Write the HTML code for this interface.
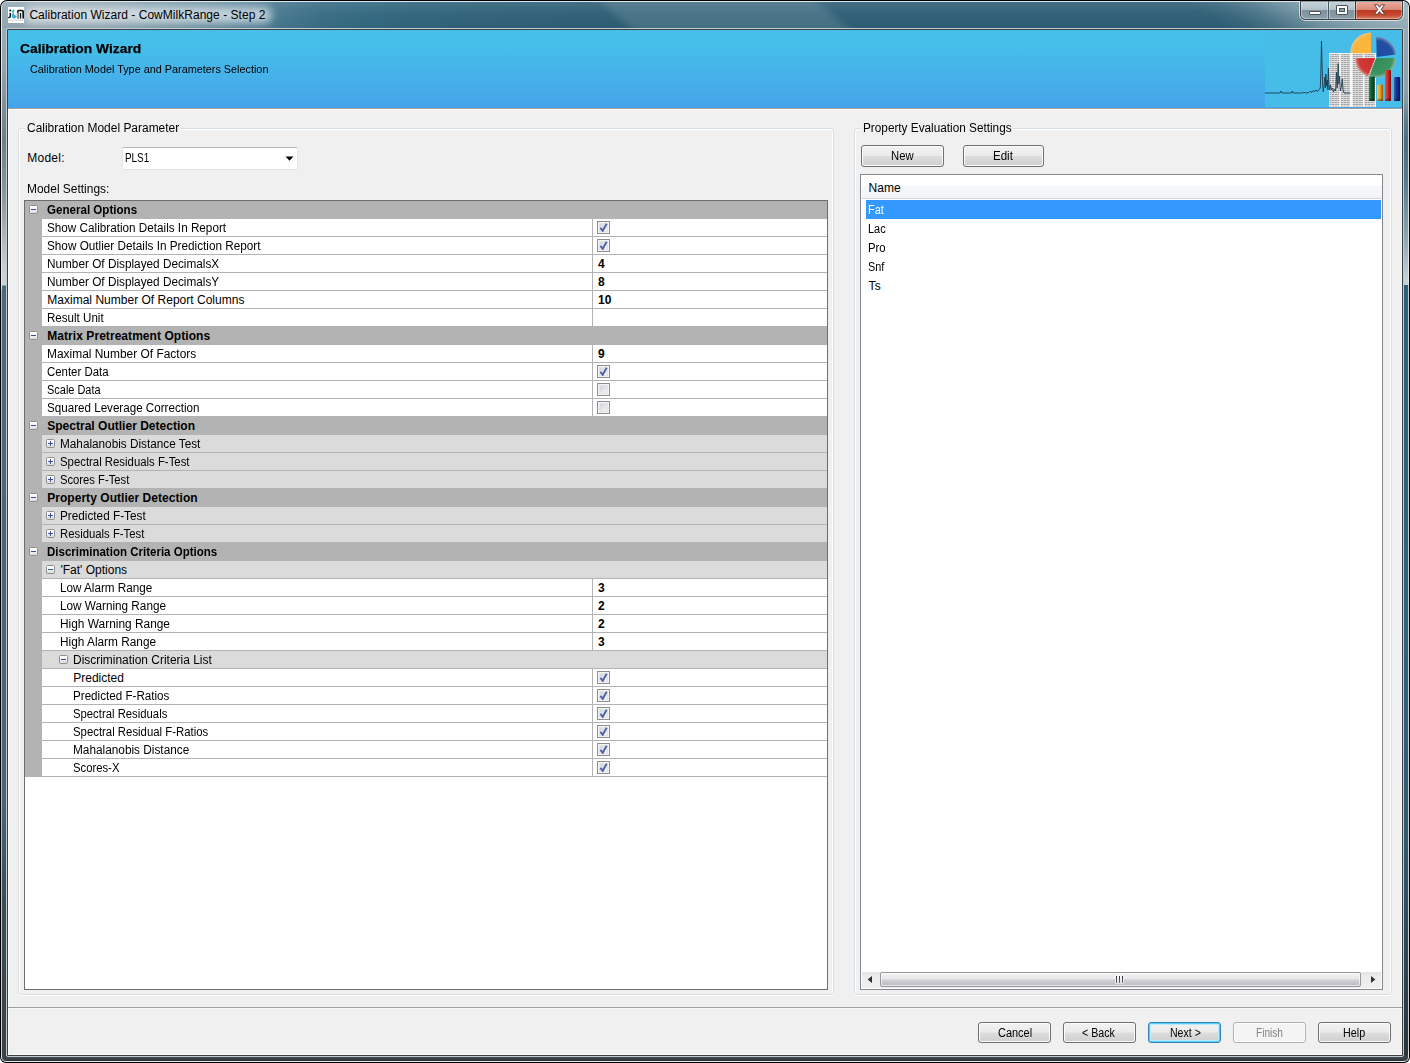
<!DOCTYPE html>
<html><head><meta charset="utf-8"><title>Calibration Wizard</title>
<style>
html,body{margin:0;padding:0;}
body{width:1410px;height:1063px;position:relative;overflow:hidden;background:#fff;font-family:"Liberation Sans", sans-serif;font-size:12px;color:#000;}
body>div,body>span,body>svg{position:absolute;}
body>span{white-space:pre;line-height:16px;transform-origin:0 0;}

.btn{box-sizing:border-box;border:1px solid #707070;border-radius:3px;background:linear-gradient(#f2f2f2 0%,#ebebeb 48%,#dddddd 52%,#cfcfcf 100%);box-shadow:inset 0 0 0 1px #fcfcfc;}
.btn.def{border-color:#3c7fb1;box-shadow:inset 0 0 0 1px #4fd0f8, inset 0 0 0 2px #b6ecfb;}
.btn.dis{border-color:#adb2b5;background:#f4f4f4;box-shadow:inset 0 0 0 1px #fcfcfc;}
.grp{box-sizing:border-box;border:1px solid #d5dfe5;border-radius:3px;box-shadow:inset 1px 1px 0 #fff,inset -1px 0 0 #fff,0 1px 0 #fff;}

</style></head><body>
<svg width="0" height="0" style="left:0;top:0"><defs><linearGradient id="cg" x1="0" y1="0" x2="1" y2="1"><stop offset="0" stop-color="#cfd3da"/><stop offset="1" stop-color="#f6f6f6"/></linearGradient><linearGradient id="eg" x1="0" y1="0" x2="0" y2="1"><stop offset="0" stop-color="#ffffff"/><stop offset=".5" stop-color="#f6f6f6"/><stop offset="1" stop-color="#d4d4d4"/></linearGradient></defs></svg>
<div id="win" style="left:0;top:0;width:1410px;height:1063px;box-sizing:border-box;border-radius:7px 7px 6px 6px;background:#000;overflow:hidden"><div style="position:absolute;left:1px;top:1px;right:1px;bottom:1px;border-radius:6px 6px 5px 5px;background:#dfe8ec"></div><div style="position:absolute;left:2px;top:2px;right:2px;bottom:2px;border-radius:5px 5px 4px 4px;background:linear-gradient(180deg,#9db2bd 0px,#93a6b0 60px,#6f7e87 140px,#8d9ba4 200px,#c3ced3 262px,#c9d3d8 283px,#4b6a7b 284px,#46677a 800px,#3b4c57 900px,#39434a 1050px)"></div><div style="position:absolute;left:7px;bottom:2px;right:7px;height:4px;background:linear-gradient(180deg,#454c50,#2b3034)"></div></div>
<div style="left:1404px;top:30px;width:4px;height:1025px;background:linear-gradient(180deg,#93a8b3 0px,#8ea2ad 55px,#7f98a5 72px,#56798b 95px,#4a7085 112px,#557b8e 150px,#8fa8b4 210px,#c4d1d7 250px,#c8d4da 254.500px,#2f6079 255px,#32637c 600px,#305c73 800px,#2c4150 960px,#2b353b 1025px)"></div>
<div style="left:1408px;top:30px;width:1px;height:1020px;background:linear-gradient(180deg,#dfe8ec 0,#c5d4db 100px,#e5ecf0 254px,#bcd0da 255px,#c0d3dc 800px,#c9cdcf 1020px)"></div>
<div style="left:1px;top:290px;width:1px;height:765px;background:linear-gradient(180deg,#a9c0cc 0,#a9c0cc 500px,#d0d4d6 765px)"></div>
<div style="left:2px;top:2px;width:1406px;height:26px;border-radius:5px 5px 0 0;background:linear-gradient(90deg,#97aab4 0px,#95a9b4 60px,#87a2af 120px,#7195a5 180px,#598499 240px,#45778e 280px,#396d85 320px,#336a82 350px,#30647b 420px,#2e5f76 590px,#2e5f76 1406px)"></div>
<div style="left:609px;top:2px;width:232px;height:26px;transform:skewX(48deg);background:linear-gradient(90deg,rgba(255,255,255,0) 0,rgba(255,255,255,.115) 14px,rgba(255,255,255,.115) 216px,rgba(255,255,255,0) 232px)"></div>
<div style="left:2px;top:2px;width:1406px;height:26px;border-radius:5px 5px 0 0;overflow:hidden"><div style="position:absolute;left:1202px;top:0;width:260px;height:26px;transform:skewX(55deg);background:linear-gradient(90deg,rgba(255,255,255,0) 0,rgba(255,255,255,.045) 28px,rgba(255,255,255,.15) 62px,rgba(255,255,255,.33) 102px,rgba(255,255,255,.46) 150px,rgba(255,255,255,.52) 200px,rgba(255,255,255,.52) 260px)"></div></div>
<div style="left:2px;top:2px;width:1406px;height:26px;border-radius:5px 5px 0 0;background:linear-gradient(180deg,rgba(255,255,255,.10) 0,rgba(255,255,255,.03) 40%,rgba(0,0,0,.03) 100%)"></div>
<div style="left:24px;top:7px;width:248px;height:16px;border-radius:8px;background:rgba(255,255,255,.62);filter:blur(4.500px)"></div>
<div style="left:6px;top:28px;width:1398px;height:1029px;box-sizing:border-box;border:1px solid #c3ccd1;border-radius:2px"></div>
<div style="left:7px;top:29px;width:1396px;height:1027px;box-sizing:border-box;border:1px solid #3a3f44;border-radius:1px;background:#f0f0f0"></div>
<svg style="left:8px;top:7px" width="16" height="16" viewBox="0 0 16 16"><rect width="16" height="16" fill="#fdfdfd"/><circle cx="2.300" cy="3.600" r="1" fill="#111"/><path d="M2.300 6V9.300C2.300 10.400 1.400 10.600 .200 10.700" fill="none" stroke="#14181a" stroke-width="1.600"/><path d="M5.300 2.600c1 0 1.500 .800 1 1.600c-.600 1-.800 1.600-.400 2.600c.300 .900 1.200 1.600 2.800 2.200c-.200 1.400-1.200 2.500-2.600 2.500c-1.600 0-2.500-1.200-2.200-3c.200-1.200 .700-2 .500-3c-.300-.900-.200-2.900 .900-2.900z" fill="#39aedb"/><path d="M9.800 11.600V4.400Q9.800 3.500 10.700 3.500H14Q15.200 3.500 15.200 4.800V11.600" fill="none" stroke="#0d1110" stroke-width="1.700"/><path d="M12.500 6V11.600" stroke="#0d1110" stroke-width="1.300"/><path d="M9.800 5.500V11.600" stroke="#9a9c9c" stroke-width="1.700"/><path d="M.500 13.300H15.500" stroke="#c6c6c6" stroke-width="1.100" stroke-dasharray="1.400 .500"/></svg>
<div style="left:1299px;top:1px;width:105px;height:20px;box-sizing:border-box;border:1px solid rgba(236,242,245,.75);border-top:none;border-radius:0 0 7px 7px"></div>
<div style="left:1300px;top:1px;width:103px;height:19px;box-sizing:border-box;border:1px solid #39434b;border-top:none;border-radius:0 0 6px 6px;background:#8b9fa9"></div>
<div style="left:1301px;top:2px;width:27px;height:17px;border-radius:0 0 0 5px;background:linear-gradient(180deg,#c6d2d8 0,#b1c0c8 47%,#7f939e 50%,#8b9fa9 100%);box-shadow:inset 1px 0 0 rgba(255,255,255,.35),inset 0 -1px 0 rgba(255,255,255,.3)"></div>
<div style="left:1329px;top:2px;width:26px;height:17px;background:linear-gradient(180deg,#c6d2d8 0,#b1c0c8 47%,#7f939e 50%,#8b9fa9 100%);box-shadow:inset 0 -1px 0 rgba(255,255,255,.3)"></div>
<div style="left:1356px;top:2px;width:46px;height:17px;border-radius:0 0 5px 0;background:linear-gradient(180deg,#eaa99b 0,#da8977 47%,#bf3a22 50%,#c64a31 78%,#d9826b 100%);box-shadow:inset -1px 0 0 rgba(255,255,255,.3),inset 0 -1px 0 rgba(255,255,255,.3)"></div>
<div style="left:1355px;top:19px;width:42px;height:1px;background:#5b2419"></div>
<div style="left:1327px;top:2px;width:3px;height:17px;background:rgba(255,255,255,.38)"></div>
<div style="left:1354px;top:2px;width:3px;height:17px;background:rgba(255,255,255,.38)"></div>
<div style="left:1328px;top:1px;width:1px;height:18px;background:#4b5860"></div>
<div style="left:1355px;top:1px;width:1px;height:18px;background:#4b2a24"></div>
<div style="left:1309px;top:11px;width:12px;height:4px;box-sizing:border-box;border:1px solid #49515c;background:#fff;border-radius:1px"></div>
<div style="left:1336px;top:5px;width:12px;height:10px;box-sizing:border-box;border:1px solid #49515c;background:#fff;border-radius:1px"></div>
<div style="left:1339px;top:8px;width:6px;height:4px;box-sizing:border-box;border:1px solid #49515c;background:#8fa0aa"></div>
<svg style="left:1373px;top:4px" width="13" height="11" viewBox="0 0 13 11"><path d="M1.500 .800H4.600L6.500 3.300L8.400 .800H11.500L8.200 5.400L11.700 10.200H8.500L6.500 7.500L4.500 10.200H1.300L4.800 5.400Z" fill="#fff" stroke="#4b3436" stroke-width=".9" stroke-linejoin="round"/></svg>
<div style="left:8px;top:30px;width:1394px;height:78px;background:linear-gradient(180deg,#45bfea 0,#45beea 18px,#46a3e9 78px)"></div>
<svg style="left:1265px;top:30px" width="137" height="77" viewBox="1265 30 137 77"><defs><radialGradient id="gy" cx="1371" cy="53" r="21" gradientUnits="userSpaceOnUse"><stop offset="0" stop-color="#ffb63a"/><stop offset=".82" stop-color="#fbb43c"/><stop offset="1" stop-color="#e6c98e"/></radialGradient><radialGradient id="gb" cx="1376.500" cy="57" r="21" gradientUnits="userSpaceOnUse"><stop offset="0" stop-color="#1d4da8"/><stop offset=".78" stop-color="#234fa0"/><stop offset="1" stop-color="#8a9cbc"/></radialGradient><radialGradient id="gr" cx="1375" cy="58" r="21" gradientUnits="userSpaceOnUse"><stop offset="0" stop-color="#d22a2a"/><stop offset=".78" stop-color="#cf3a36"/><stop offset="1" stop-color="#e3aaa2"/></radialGradient><radialGradient id="gg" cx="1376" cy="58" r="21" gradientUnits="userSpaceOnUse"><stop offset="0" stop-color="#2e8b57"/><stop offset=".78" stop-color="#3c9461"/><stop offset="1" stop-color="#a4c6aa"/></radialGradient><linearGradient id="bg1" x1="0" x2="1"><stop offset="0" stop-color="#2f8a55"/><stop offset=".45" stop-color="#0c5a30"/><stop offset="1" stop-color="#063d1f"/></linearGradient><linearGradient id="bg2" x1="0" x2="1"><stop offset="0" stop-color="#ffc24a"/><stop offset=".5" stop-color="#f0a020"/><stop offset="1" stop-color="#8a5a0c"/></linearGradient><linearGradient id="bg3" x1="0" x2="1"><stop offset="0" stop-color="#e85a50"/><stop offset=".5" stop-color="#d02424"/><stop offset="1" stop-color="#7a0f12"/></linearGradient><linearGradient id="bg4" x1="0" x2="1"><stop offset="0" stop-color="#3a58b0"/><stop offset=".5" stop-color="#122c88"/><stop offset="1" stop-color="#061560"/></linearGradient><linearGradient id="ft" x1="0" y1="0" x2="0" y2="1"><stop offset="0" stop-color="#000" stop-opacity="0"/><stop offset="1" stop-color="#000" stop-opacity=".45"/></linearGradient><pattern id="tb" x="1329" y="54" width="3" height="2" patternUnits="userSpaceOnUse"><rect width="3" height="2" fill="#dedede"/><rect width="2" height="1" fill="#a2a2a2"/><rect x="2" width="1" height="1" fill="#c4c4c4"/></pattern></defs><rect x="1265" y="30" width="137" height="77" fill="#46bde9"/><rect x="1329" y="53" width="47" height="54" fill="#f6f6f6"/><rect x="1329.5" y="54" width="9.7" height="52.500" fill="url(#tb)"/><rect x="1340.8" y="54" width="9.2" height="52.500" fill="url(#tb)"/><rect x="1352.6" y="54" width="10.3" height="52.500" fill="url(#tb)"/><rect x="1364.4" y="54" width="10.3" height="52.500" fill="url(#tb)"/><path d="M1265 93L1280 93L1281 91L1282 93L1291.5 93L1292.4 91L1293.3 93L1302 93L1304 92.3L1306 93L1309 92.5L1310.5 91L1311.5 92.5L1313 90.5L1314.5 92L1316 90L1317.5 91.5L1319 89.5L1320.3 88L1320.9 70L1321.5 41L1322.1 66L1322.7 85L1323.3 92L1324.2 84L1324.8 77L1325.4 88L1325.9 74L1326.6 86L1327.3 80L1327.9 90L1328.4 68L1329 84L1329.7 90L1330.5 85L1331.4 90L1332.5 88L1333.5 92L1334.6 89L1335.6 91L1336.5 72L1337.2 88L1338.2 63.5L1338.9 84L1339.6 76L1340.3 91L1341.4 86L1342.3 79L1343.1 90L1344 93L1350.5 93" fill="none" stroke="#1c3c4e" stroke-width=".9" stroke-linejoin="round"/><path d="M1371 53.200V32.500A20.500 20.500 0 0 0 1350.300 53.200Z" fill="url(#gy)"/><path d="M1376.200 36.700A20 20 0 0 1 1395.900 54.600L1376.800 57Z" fill="url(#gb)"/><path d="M1375.200 58L1355.200 58.300A20 20 0 0 0 1367.800 76.600Z" fill="url(#gr)"/><path d="M1376 58.200L1396 57.800A20 20 0 0 1 1375 77.800L1369 77.200Z" fill="url(#gg)"/><rect x="1369" y="76.5" width="5.8" height="24.5" rx=".800" fill="url(#bg1)"/><rect x="1369" y="98" width="5.8" height="3" rx=".800" fill="url(#ft)"/><rect x="1377" y="84.7" width="6" height="16.299999999999997" rx=".800" fill="url(#bg2)"/><rect x="1377" y="98" width="6" height="3" rx=".800" fill="url(#ft)"/><rect x="1385" y="70" width="6" height="31" rx=".800" fill="url(#bg3)"/><rect x="1385" y="98" width="6" height="3" rx=".800" fill="url(#ft)"/><rect x="1394" y="77" width="6.2" height="24" rx=".800" fill="url(#bg4)"/><rect x="1394" y="98" width="6.2" height="3" rx=".800" fill="url(#ft)"/></svg>
<div style="left:8px;top:108px;width:1394px;height:1px;background:#a19e9d"></div>
<div style="left:8px;top:109px;width:1394px;height:1px;background:#fff"></div>
<div style="left:8px;top:110px;width:1px;height:945px;background:#fbfbfb"></div>
<div style="left:1401px;top:110px;width:1px;height:945px;background:#fbfbfb"></div>
<div style="left:8px;top:1054px;width:1394px;height:1px;background:#fbfbfb"></div>
<div style="left:8px;top:1007px;width:1394px;height:1px;background:#a0a0a0"></div>
<div style="left:8px;top:1008px;width:1394px;height:1px;background:#f9f9f9"></div>
<div class="grp" style="left:18px;top:128px;width:816px;height:867px"></div>
<div style="left:26px;top:120px;width:154px;height:14px;background:#f0f0f0"></div>
<div class="grp" style="left:854px;top:128px;width:538px;height:867px"></div>
<div style="left:861px;top:120px;width:151px;height:14px;background:#f0f0f0"></div>
<div style="left:122px;top:147px;width:176px;height:23px;box-sizing:border-box;border:1px solid #e1e7ed;border-top-color:#b3b7bd;border-bottom-color:#dbe2ea;border-radius:2px;background:#fff"></div>
<svg style="left:285px;top:156px" width="9" height="5" viewBox="0 0 9 5"><path d="M.500 .500H8.500L4.500 4.700Z" fill="#000"/></svg>
<div class="btn" style="left:861px;top:145px;width:83px;height:22px"></div>
<div class="btn" style="left:963px;top:145px;width:81px;height:22px"></div>
<div class="btn" style="left:978px;top:1022px;width:73px;height:21px"></div>
<div class="btn" style="left:1063px;top:1022px;width:73px;height:21px"></div>
<div class="btn def" style="left:1148px;top:1022px;width:73px;height:21px"></div>
<div class="btn dis" style="left:1233px;top:1022px;width:73px;height:21px"></div>
<div class="btn" style="left:1318px;top:1022px;width:73px;height:21px"></div>
<div style="left:860px;top:174px;width:523px;height:816px;box-sizing:border-box;border:1px solid #828790;background:#fff"></div>
<div style="left:862px;top:175px;width:520px;height:23px;background:linear-gradient(180deg,#fff 0,#fff 44%,#f6f7f9 48%,#f4f5f7 100%)"></div>
<div style="left:862px;top:198px;width:520px;height:1px;background:#d5d5d5"></div>
<div style="left:866px;top:200px;width:515px;height:19px;background:#3399ff"></div>
<div style="left:862px;top:972px;width:519px;height:16px;background:linear-gradient(180deg,#e3e3e3 0,#ececec 25%,#efefef 100%)"></div>
<div style="left:880px;top:972px;width:481px;height:15px;box-sizing:border-box;border:1px solid #979797;border-radius:2px;background:linear-gradient(180deg,#f2f2f2 0,#e7e7e8 46%,#d0d1d4 54%,#babbbf 100%);box-shadow:inset 0 0 0 1px rgba(255,255,255,.65)"></div>
<svg style="left:867px;top:975px" width="6" height="9" viewBox="0 0 6 9"><path d="M5 1V8L.600 4.500Z" fill="#303030"/></svg>
<svg style="left:1370px;top:975px" width="6" height="9" viewBox="0 0 6 9"><path d="M1 1V8L5.300 4.500Z" fill="#303030"/></svg>
<div style="left:1115px;top:975px;width:3px;height:9px;background:rgba(255,255,255,.55);border-radius:1px"></div>
<div style="left:1116px;top:976px;width:1px;height:7px;background:linear-gradient(180deg,#2c2c2c,#6e6e6e)"></div>
<div style="left:1118px;top:975px;width:3px;height:9px;background:rgba(255,255,255,.55);border-radius:1px"></div>
<div style="left:1119px;top:976px;width:1px;height:7px;background:linear-gradient(180deg,#2c2c2c,#6e6e6e)"></div>
<div style="left:1121px;top:975px;width:3px;height:9px;background:rgba(255,255,255,.55);border-radius:1px"></div>
<div style="left:1122px;top:976px;width:1px;height:7px;background:linear-gradient(180deg,#2c2c2c,#6e6e6e)"></div>
<div style="left:24px;top:200px;width:804px;height:790px;background:#fff;border:1px solid #6d6d6d;box-sizing:border-box"></div>
<div style="left:25px;top:201px;width:17px;height:576px;background:#b3b3b3"></div>
<div style="left:25px;top:201px;width:802px;height:18px;background:#b3b3b3"></div>
<svg style="left:29px;top:205px" width="9" height="9" viewBox="0 0 9 9"><rect x=".5" y=".5" width="8" height="8" rx="1" fill="url(#eg)" stroke="#8f8f8f"/><rect x="2" y="4" width="5" height="1" fill="#3a4fa0"/></svg>
<div style="left:42px;top:236px;width:785px;height:1px;background:#b3b3b3"></div>
<div style="left:592px;top:219px;width:1px;height:17px;background:#b3b3b3"></div>
<svg style="left:597px;top:221px" width="13" height="13" viewBox="0 0 13 13"><rect x=".5" y=".5" width="12" height="12" fill="#f4f4f4" stroke="#8e8f8f"/><rect x="2.5" y="2.5" width="8" height="8" fill="url(#cg)" stroke="#e2e3e6"/><path d="M3.400 6.900L5.700 9.800L9.700 2.700" fill="none" stroke="#4a60a0" stroke-width="1.800" stroke-linejoin="miter"/></svg>
<div style="left:42px;top:254px;width:785px;height:1px;background:#b3b3b3"></div>
<div style="left:592px;top:237px;width:1px;height:17px;background:#b3b3b3"></div>
<svg style="left:597px;top:239px" width="13" height="13" viewBox="0 0 13 13"><rect x=".5" y=".5" width="12" height="12" fill="#f4f4f4" stroke="#8e8f8f"/><rect x="2.5" y="2.5" width="8" height="8" fill="url(#cg)" stroke="#e2e3e6"/><path d="M3.400 6.900L5.700 9.800L9.700 2.700" fill="none" stroke="#4a60a0" stroke-width="1.800" stroke-linejoin="miter"/></svg>
<div style="left:42px;top:272px;width:785px;height:1px;background:#b3b3b3"></div>
<div style="left:592px;top:255px;width:1px;height:17px;background:#b3b3b3"></div>
<div style="left:42px;top:290px;width:785px;height:1px;background:#b3b3b3"></div>
<div style="left:592px;top:273px;width:1px;height:17px;background:#b3b3b3"></div>
<div style="left:42px;top:308px;width:785px;height:1px;background:#b3b3b3"></div>
<div style="left:592px;top:291px;width:1px;height:17px;background:#b3b3b3"></div>
<div style="left:42px;top:326px;width:785px;height:1px;background:#b3b3b3"></div>
<div style="left:592px;top:309px;width:1px;height:17px;background:#b3b3b3"></div>
<div style="left:25px;top:327px;width:802px;height:18px;background:#b3b3b3"></div>
<svg style="left:29px;top:331px" width="9" height="9" viewBox="0 0 9 9"><rect x=".5" y=".5" width="8" height="8" rx="1" fill="url(#eg)" stroke="#8f8f8f"/><rect x="2" y="4" width="5" height="1" fill="#3a4fa0"/></svg>
<div style="left:42px;top:362px;width:785px;height:1px;background:#b3b3b3"></div>
<div style="left:592px;top:345px;width:1px;height:17px;background:#b3b3b3"></div>
<div style="left:42px;top:380px;width:785px;height:1px;background:#b3b3b3"></div>
<div style="left:592px;top:363px;width:1px;height:17px;background:#b3b3b3"></div>
<svg style="left:597px;top:365px" width="13" height="13" viewBox="0 0 13 13"><rect x=".5" y=".5" width="12" height="12" fill="#f4f4f4" stroke="#8e8f8f"/><rect x="2.5" y="2.5" width="8" height="8" fill="url(#cg)" stroke="#e2e3e6"/><path d="M3.400 6.900L5.700 9.800L9.700 2.700" fill="none" stroke="#4a60a0" stroke-width="1.800" stroke-linejoin="miter"/></svg>
<div style="left:42px;top:398px;width:785px;height:1px;background:#b3b3b3"></div>
<div style="left:592px;top:381px;width:1px;height:17px;background:#b3b3b3"></div>
<svg style="left:597px;top:383px" width="13" height="13" viewBox="0 0 13 13"><rect x=".5" y=".5" width="12" height="12" fill="#f4f4f4" stroke="#8e8f8f"/><rect x="2.5" y="2.5" width="8" height="8" fill="url(#cg)" stroke="#e2e3e6"/></svg>
<div style="left:42px;top:416px;width:785px;height:1px;background:#b3b3b3"></div>
<div style="left:592px;top:399px;width:1px;height:17px;background:#b3b3b3"></div>
<svg style="left:597px;top:401px" width="13" height="13" viewBox="0 0 13 13"><rect x=".5" y=".5" width="12" height="12" fill="#f4f4f4" stroke="#8e8f8f"/><rect x="2.5" y="2.5" width="8" height="8" fill="url(#cg)" stroke="#e2e3e6"/></svg>
<div style="left:25px;top:417px;width:802px;height:18px;background:#b3b3b3"></div>
<svg style="left:29px;top:421px" width="9" height="9" viewBox="0 0 9 9"><rect x=".5" y=".5" width="8" height="8" rx="1" fill="url(#eg)" stroke="#8f8f8f"/><rect x="2" y="4" width="5" height="1" fill="#3a4fa0"/></svg>
<div style="left:42px;top:435px;width:785px;height:17px;background:#dbdbdb"></div>
<div style="left:42px;top:452px;width:785px;height:1px;background:#b3b3b3"></div>
<svg style="left:46px;top:439px" width="9" height="9" viewBox="0 0 9 9"><rect x=".5" y=".5" width="8" height="8" rx="1" fill="url(#eg)" stroke="#8f8f8f"/><rect x="2" y="4" width="5" height="1" fill="#3a4fa0"/><rect x="4" y="2" width="1" height="5" fill="#3a4fa0"/></svg>
<div style="left:42px;top:453px;width:785px;height:17px;background:#dbdbdb"></div>
<div style="left:42px;top:470px;width:785px;height:1px;background:#b3b3b3"></div>
<svg style="left:46px;top:457px" width="9" height="9" viewBox="0 0 9 9"><rect x=".5" y=".5" width="8" height="8" rx="1" fill="url(#eg)" stroke="#8f8f8f"/><rect x="2" y="4" width="5" height="1" fill="#3a4fa0"/><rect x="4" y="2" width="1" height="5" fill="#3a4fa0"/></svg>
<div style="left:42px;top:471px;width:785px;height:17px;background:#dbdbdb"></div>
<div style="left:42px;top:488px;width:785px;height:1px;background:#b3b3b3"></div>
<svg style="left:46px;top:475px" width="9" height="9" viewBox="0 0 9 9"><rect x=".5" y=".5" width="8" height="8" rx="1" fill="url(#eg)" stroke="#8f8f8f"/><rect x="2" y="4" width="5" height="1" fill="#3a4fa0"/><rect x="4" y="2" width="1" height="5" fill="#3a4fa0"/></svg>
<div style="left:25px;top:489px;width:802px;height:18px;background:#b3b3b3"></div>
<svg style="left:29px;top:493px" width="9" height="9" viewBox="0 0 9 9"><rect x=".5" y=".5" width="8" height="8" rx="1" fill="url(#eg)" stroke="#8f8f8f"/><rect x="2" y="4" width="5" height="1" fill="#3a4fa0"/></svg>
<div style="left:42px;top:507px;width:785px;height:17px;background:#dbdbdb"></div>
<div style="left:42px;top:524px;width:785px;height:1px;background:#b3b3b3"></div>
<svg style="left:46px;top:511px" width="9" height="9" viewBox="0 0 9 9"><rect x=".5" y=".5" width="8" height="8" rx="1" fill="url(#eg)" stroke="#8f8f8f"/><rect x="2" y="4" width="5" height="1" fill="#3a4fa0"/><rect x="4" y="2" width="1" height="5" fill="#3a4fa0"/></svg>
<div style="left:42px;top:525px;width:785px;height:17px;background:#dbdbdb"></div>
<div style="left:42px;top:542px;width:785px;height:1px;background:#b3b3b3"></div>
<svg style="left:46px;top:529px" width="9" height="9" viewBox="0 0 9 9"><rect x=".5" y=".5" width="8" height="8" rx="1" fill="url(#eg)" stroke="#8f8f8f"/><rect x="2" y="4" width="5" height="1" fill="#3a4fa0"/><rect x="4" y="2" width="1" height="5" fill="#3a4fa0"/></svg>
<div style="left:25px;top:543px;width:802px;height:18px;background:#b3b3b3"></div>
<svg style="left:29px;top:547px" width="9" height="9" viewBox="0 0 9 9"><rect x=".5" y=".5" width="8" height="8" rx="1" fill="url(#eg)" stroke="#8f8f8f"/><rect x="2" y="4" width="5" height="1" fill="#3a4fa0"/></svg>
<div style="left:42px;top:561px;width:785px;height:17px;background:#dbdbdb"></div>
<div style="left:42px;top:578px;width:785px;height:1px;background:#b3b3b3"></div>
<svg style="left:46px;top:565px" width="9" height="9" viewBox="0 0 9 9"><rect x=".5" y=".5" width="8" height="8" rx="1" fill="url(#eg)" stroke="#8f8f8f"/><rect x="2" y="4" width="5" height="1" fill="#3a4fa0"/></svg>
<div style="left:42px;top:596px;width:785px;height:1px;background:#b3b3b3"></div>
<div style="left:592px;top:579px;width:1px;height:17px;background:#b3b3b3"></div>
<div style="left:42px;top:614px;width:785px;height:1px;background:#b3b3b3"></div>
<div style="left:592px;top:597px;width:1px;height:17px;background:#b3b3b3"></div>
<div style="left:42px;top:632px;width:785px;height:1px;background:#b3b3b3"></div>
<div style="left:592px;top:615px;width:1px;height:17px;background:#b3b3b3"></div>
<div style="left:42px;top:650px;width:785px;height:1px;background:#b3b3b3"></div>
<div style="left:592px;top:633px;width:1px;height:17px;background:#b3b3b3"></div>
<div style="left:42px;top:651px;width:785px;height:17px;background:#dbdbdb"></div>
<div style="left:42px;top:668px;width:785px;height:1px;background:#b3b3b3"></div>
<svg style="left:59px;top:655px" width="9" height="9" viewBox="0 0 9 9"><rect x=".5" y=".5" width="8" height="8" rx="1" fill="url(#eg)" stroke="#8f8f8f"/><rect x="2" y="4" width="5" height="1" fill="#3a4fa0"/></svg>
<div style="left:42px;top:686px;width:785px;height:1px;background:#b3b3b3"></div>
<div style="left:592px;top:669px;width:1px;height:17px;background:#b3b3b3"></div>
<svg style="left:597px;top:671px" width="13" height="13" viewBox="0 0 13 13"><rect x=".5" y=".5" width="12" height="12" fill="#f4f4f4" stroke="#8e8f8f"/><rect x="2.5" y="2.5" width="8" height="8" fill="url(#cg)" stroke="#e2e3e6"/><path d="M3.400 6.900L5.700 9.800L9.700 2.700" fill="none" stroke="#4a60a0" stroke-width="1.800" stroke-linejoin="miter"/></svg>
<div style="left:42px;top:704px;width:785px;height:1px;background:#b3b3b3"></div>
<div style="left:592px;top:687px;width:1px;height:17px;background:#b3b3b3"></div>
<svg style="left:597px;top:689px" width="13" height="13" viewBox="0 0 13 13"><rect x=".5" y=".5" width="12" height="12" fill="#f4f4f4" stroke="#8e8f8f"/><rect x="2.5" y="2.5" width="8" height="8" fill="url(#cg)" stroke="#e2e3e6"/><path d="M3.400 6.900L5.700 9.800L9.700 2.700" fill="none" stroke="#4a60a0" stroke-width="1.800" stroke-linejoin="miter"/></svg>
<div style="left:42px;top:722px;width:785px;height:1px;background:#b3b3b3"></div>
<div style="left:592px;top:705px;width:1px;height:17px;background:#b3b3b3"></div>
<svg style="left:597px;top:707px" width="13" height="13" viewBox="0 0 13 13"><rect x=".5" y=".5" width="12" height="12" fill="#f4f4f4" stroke="#8e8f8f"/><rect x="2.5" y="2.5" width="8" height="8" fill="url(#cg)" stroke="#e2e3e6"/><path d="M3.400 6.900L5.700 9.800L9.700 2.700" fill="none" stroke="#4a60a0" stroke-width="1.800" stroke-linejoin="miter"/></svg>
<div style="left:42px;top:740px;width:785px;height:1px;background:#b3b3b3"></div>
<div style="left:592px;top:723px;width:1px;height:17px;background:#b3b3b3"></div>
<svg style="left:597px;top:725px" width="13" height="13" viewBox="0 0 13 13"><rect x=".5" y=".5" width="12" height="12" fill="#f4f4f4" stroke="#8e8f8f"/><rect x="2.5" y="2.5" width="8" height="8" fill="url(#cg)" stroke="#e2e3e6"/><path d="M3.400 6.900L5.700 9.800L9.700 2.700" fill="none" stroke="#4a60a0" stroke-width="1.800" stroke-linejoin="miter"/></svg>
<div style="left:42px;top:758px;width:785px;height:1px;background:#b3b3b3"></div>
<div style="left:592px;top:741px;width:1px;height:17px;background:#b3b3b3"></div>
<svg style="left:597px;top:743px" width="13" height="13" viewBox="0 0 13 13"><rect x=".5" y=".5" width="12" height="12" fill="#f4f4f4" stroke="#8e8f8f"/><rect x="2.5" y="2.5" width="8" height="8" fill="url(#cg)" stroke="#e2e3e6"/><path d="M3.400 6.900L5.700 9.800L9.700 2.700" fill="none" stroke="#4a60a0" stroke-width="1.800" stroke-linejoin="miter"/></svg>
<div style="left:42px;top:776px;width:785px;height:1px;background:#b3b3b3"></div>
<div style="left:592px;top:759px;width:1px;height:17px;background:#b3b3b3"></div>
<svg style="left:597px;top:761px" width="13" height="13" viewBox="0 0 13 13"><rect x=".5" y=".5" width="12" height="12" fill="#f4f4f4" stroke="#8e8f8f"/><rect x="2.5" y="2.5" width="8" height="8" fill="url(#cg)" stroke="#e2e3e6"/><path d="M3.400 6.900L5.700 9.800L9.700 2.700" fill="none" stroke="#4a60a0" stroke-width="1.800" stroke-linejoin="miter"/></svg>

<span style="left:29.40px;top:6.50px;letter-spacing:0.030px;">Calibration Wizard - CowMilkRange - Step 2</span>
<span style="left:20.30px;top:41.00px;font-size:13px;font-weight:700;transform:scaleX(1.0634);-webkit-text-stroke:.25px #000;">Calibration Wizard</span>
<span style="left:30.00px;top:61.00px;font-size:11px;transform:scaleX(0.9855);">Calibration Model Type and Parameters Selection</span>
<span style="left:27.30px;top:120.00px;transform:scaleX(0.9965);">Calibration Model Parameter</span>
<span style="left:27.30px;top:150.00px;letter-spacing:0.243px;">Model:</span>
<span style="left:125.20px;top:150.00px;transform:scaleX(0.8254);">PLS1</span>
<span style="left:27.30px;top:181.00px;transform:scaleX(0.9954);">Model Settings:</span>
<span style="left:863.10px;top:120.00px;transform:scaleX(0.9814);">Property Evaluation Settings</span>
<span style="left:890.50px;top:148.00px;transform:scaleX(0.9408);">New</span>
<span style="left:993.30px;top:148.00px;transform:scaleX(0.9605);">Edit</span>
<span style="left:868.40px;top:180.00px;letter-spacing:0.088px;">Name</span>
<span style="left:868.40px;top:202.00px;color:#fff;transform:scaleX(0.9054);">Fat</span>
<span style="left:868.40px;top:221.00px;transform:scaleX(0.9148);">Lac</span>
<span style="left:868.40px;top:240.00px;transform:scaleX(0.9421);">Pro</span>
<span style="left:868.40px;top:259.00px;transform:scaleX(0.9048);">Snf</span>
<span style="left:868.40px;top:278.00px;letter-spacing:0.400px;">Ts</span>
<span style="left:997.70px;top:1025.00px;transform:scaleX(0.9131);">Cancel</span>
<span style="left:1082.10px;top:1025.00px;transform:scaleX(0.8864);">&lt; Back</span>
<span style="left:1169.50px;top:1025.00px;transform:scaleX(0.8798);">Next &gt;</span>
<span style="left:1256.30px;top:1025.00px;color:#838383;transform:scaleX(0.8393);">Finish</span>
<span style="left:1343.00px;top:1025.00px;transform:scaleX(0.8958);">Help</span>
<span style="left:47.30px;top:202.00px;font-weight:700;transform:scaleX(0.9650);">General Options</span>
<span style="left:47.00px;top:220.00px;transform:scaleX(0.9762);">Show Calibration Details In Report</span>
<span style="left:47.30px;top:238.00px;transform:scaleX(0.9787);">Show Outlier Details In Prediction Report</span>
<span style="left:47.30px;top:256.00px;transform:scaleX(0.9818);">Number Of Displayed DecimalsX</span>
<span style="left:598.00px;top:256.00px;font-weight:700;">4</span>
<span style="left:47.30px;top:274.00px;transform:scaleX(0.9818);">Number Of Displayed DecimalsY</span>
<span style="left:598.00px;top:274.00px;font-weight:700;">8</span>
<span style="left:47.30px;top:292.00px;letter-spacing:0.012px;">Maximal Number Of Report Columns</span>
<span style="left:598.00px;top:292.00px;font-weight:700;">10</span>
<span style="left:47.30px;top:310.00px;transform:scaleX(0.9654);">Result Unit</span>
<span style="left:47.30px;top:328.00px;font-weight:700;letter-spacing:0.054px;">Matrix Pretreatment Options</span>
<span style="left:47.20px;top:346.00px;transform:scaleX(0.9945);">Maximal Number Of Factors</span>
<span style="left:598.00px;top:346.00px;font-weight:700;">9</span>
<span style="left:47.20px;top:364.00px;transform:scaleX(0.9504);">Center Data</span>
<span style="left:47.20px;top:382.00px;transform:scaleX(0.9132);">Scale Data</span>
<span style="left:47.20px;top:400.00px;transform:scaleX(0.9684);">Squared Leverage Correction</span>
<span style="left:47.20px;top:418.00px;font-weight:700;letter-spacing:0.018px;">Spectral Outlier Detection</span>
<span style="left:60.40px;top:436.00px;transform:scaleX(0.9801);">Mahalanobis Distance Test</span>
<span style="left:60.40px;top:454.00px;transform:scaleX(0.9470);">Spectral Residuals F-Test</span>
<span style="left:60.40px;top:472.00px;transform:scaleX(0.9360);">Scores F-Test</span>
<span style="left:47.20px;top:490.00px;font-weight:700;letter-spacing:0.043px;">Property Outlier Detection</span>
<span style="left:60.40px;top:508.00px;transform:scaleX(0.9804);">Predicted F-Test</span>
<span style="left:60.40px;top:526.00px;transform:scaleX(0.9442);">Residuals F-Test</span>
<span style="left:47.20px;top:544.00px;font-weight:700;transform:scaleX(0.9595);">Discrimination Criteria Options</span>
<span style="left:60.40px;top:562.00px;letter-spacing:0.008px;">&#x27;Fat&#x27; Options</span>
<span style="left:60.40px;top:580.00px;transform:scaleX(0.9749);">Low Alarm Range</span>
<span style="left:598.00px;top:580.00px;font-weight:700;">3</span>
<span style="left:60.40px;top:598.00px;transform:scaleX(0.9788);">Low Warning Range</span>
<span style="left:598.00px;top:598.00px;font-weight:700;">2</span>
<span style="left:60.40px;top:616.00px;transform:scaleX(0.9913);">High Warning Range</span>
<span style="left:598.00px;top:616.00px;font-weight:700;">2</span>
<span style="left:60.40px;top:634.00px;transform:scaleX(0.9871);">High Alarm Range</span>
<span style="left:598.00px;top:634.00px;font-weight:700;">3</span>
<span style="left:73.20px;top:652.00px;transform:scaleX(0.9955);">Discrimination Criteria List</span>
<span style="left:73.20px;top:670.00px;letter-spacing:0.010px;">Predicted</span>
<span style="left:73.20px;top:688.00px;transform:scaleX(0.9701);">Predicted F-Ratios</span>
<span style="left:73.20px;top:706.00px;transform:scaleX(0.9425);">Spectral Residuals</span>
<span style="left:73.20px;top:724.00px;transform:scaleX(0.9473);">Spectral Residual F-Ratios</span>
<span style="left:73.20px;top:742.00px;transform:scaleX(0.9849);">Mahalanobis Distance</span>
<span style="left:73.20px;top:760.00px;transform:scaleX(0.9403);">Scores-X</span>
</body></html>
